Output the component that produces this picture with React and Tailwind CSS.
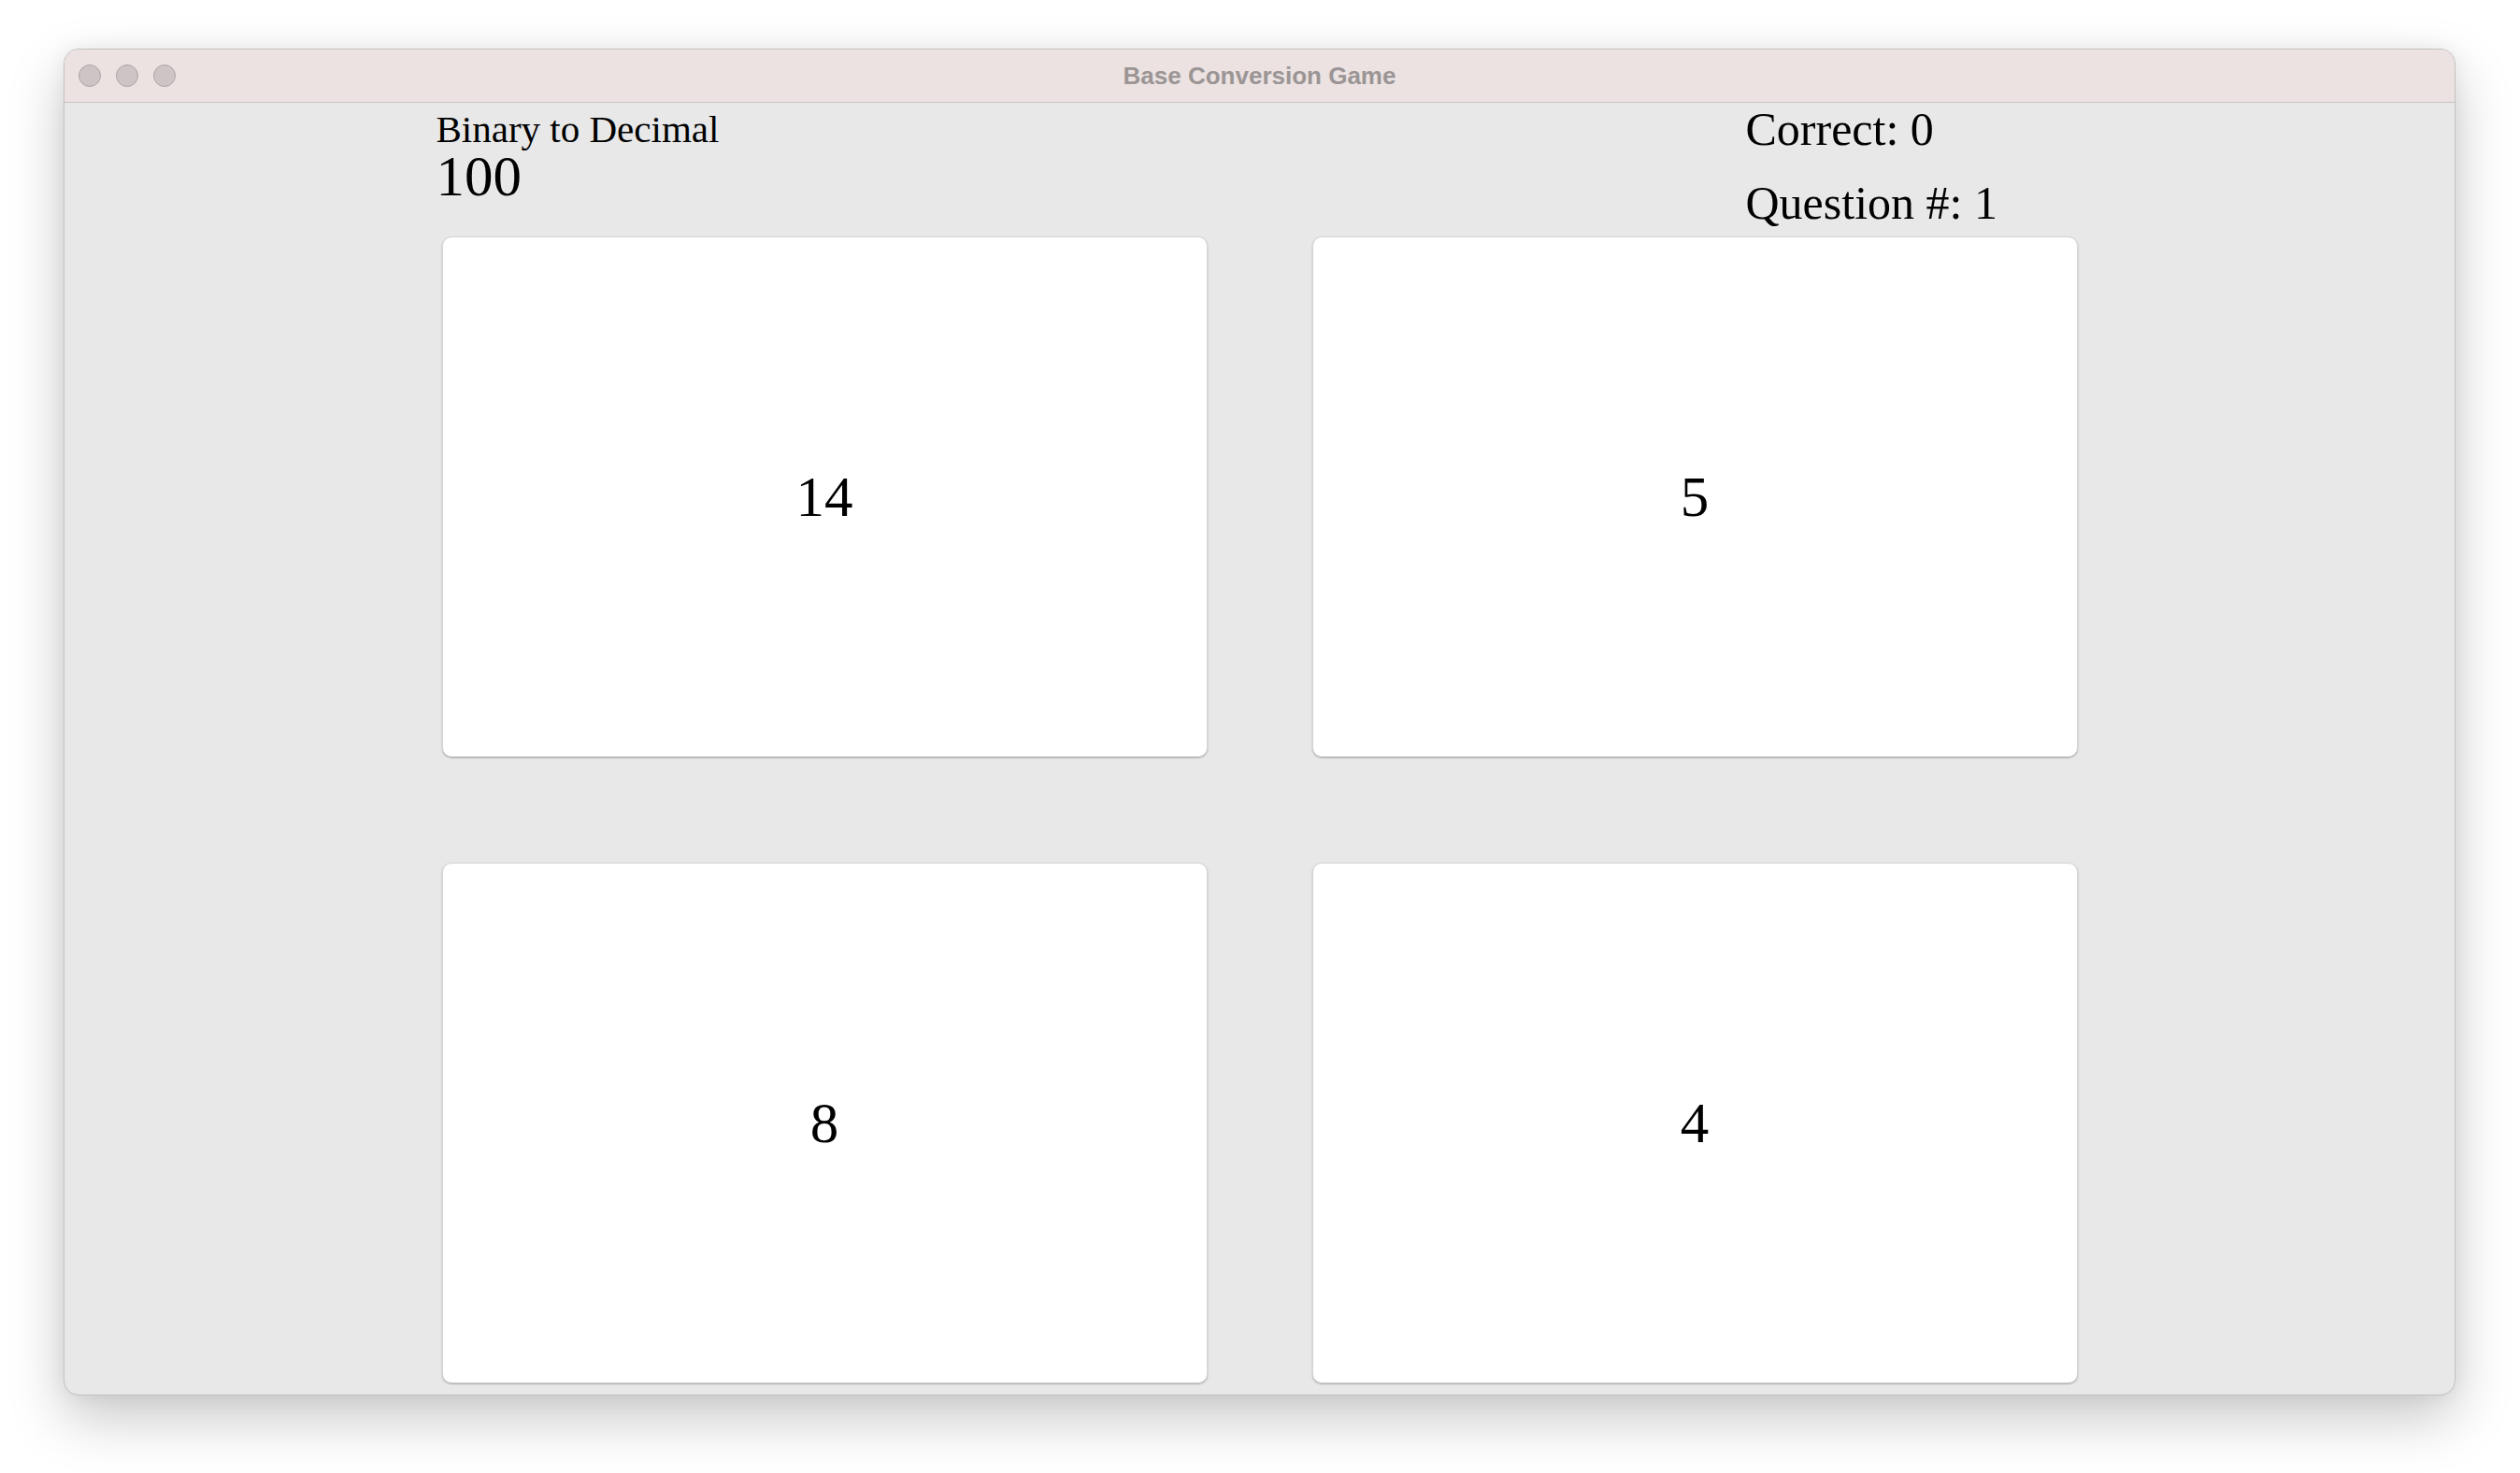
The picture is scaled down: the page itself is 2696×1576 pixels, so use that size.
import React, { useState } from "react";

const serif = { fontFamily: '"Liberation Serif", "Times New Roman", serif' };

const answers = [14, 5, 8, 4];

export default function App() {
  const [correct, setCorrect] = useState(0);
  const [question, setQuestion] = useState(1);

  const pick = (n) => {
    if (n === 4) setCorrect((c) => c + 1);
    setQuestion((q) => q + 1);
  };

  return (
    <div className="w-[2696px] h-[1576px] bg-white pt-[52px] pl-[68px] overflow-hidden">
      {/* window */}
      <div className="w-[2559px] h-[1441px] rounded-[16px] overflow-hidden border border-[#c4c0c0] bg-[#e8e8e8] shadow-[0_24px_60px_rgba(0,0,0,0.22),0_0_20px_rgba(0,0,0,0.06)] flex flex-col">
        {/* title bar */}
        <div className="relative h-[57px] shrink-0 bg-[#ebe2e1] border-b border-[#c9c3c2] flex items-center">
          <div className="flex items-center gap-[16px] pl-[15px]">
            <span className="w-[24px] h-[24px] rounded-full bg-[#cdc5c5] border border-[#ada4a4]"></span>
            <span className="w-[24px] h-[24px] rounded-full bg-[#cdc5c5] border border-[#ada4a4]"></span>
            <span className="w-[24px] h-[24px] rounded-full bg-[#cdc5c5] border border-[#ada4a4]"></span>
          </div>
          <div
            className="absolute inset-0 flex items-center justify-center text-[26px] font-bold text-[#9b9595]"
            style={{ fontFamily: '"Liberation Sans", Arial, sans-serif' }}
          >
            Base Conversion Game
          </div>
        </div>

        {/* content */}
        <div className="w-[1750px] mx-auto text-black" style={serif}>
          <div className="flex h-[143px]">
            <div className="w-[1401px] -ml-[6px] pt-[8px]">
              <div className="text-[41px] leading-[40px]">Binary to Decimal</div>
              <div className="text-[61px] leading-[61px]">100</div>
            </div>
            <div className="flex flex-col gap-[29px] pt-[3px]">
              <div className="text-[50px] leading-[50px]">Correct: {correct}</div>
              <div className="text-[50px] leading-[50px]">Question #: {question}</div>
            </div>
          </div>

          <div className="grid grid-cols-2 gap-x-[112px] gap-y-[113px]">
            {answers.map((n) => (
              <button
                key={n}
                onClick={() => pick(n)}
                className="h-[557px] bg-white rounded-[10px] border border-[#d6d6d6] shadow-[0_1px_2px_rgba(0,0,0,0.28)] flex items-center justify-center text-[61px]"
                style={serif}
              >
                {n}
              </button>
            ))}
          </div>
        </div>
      </div>
    </div>
  );
}
